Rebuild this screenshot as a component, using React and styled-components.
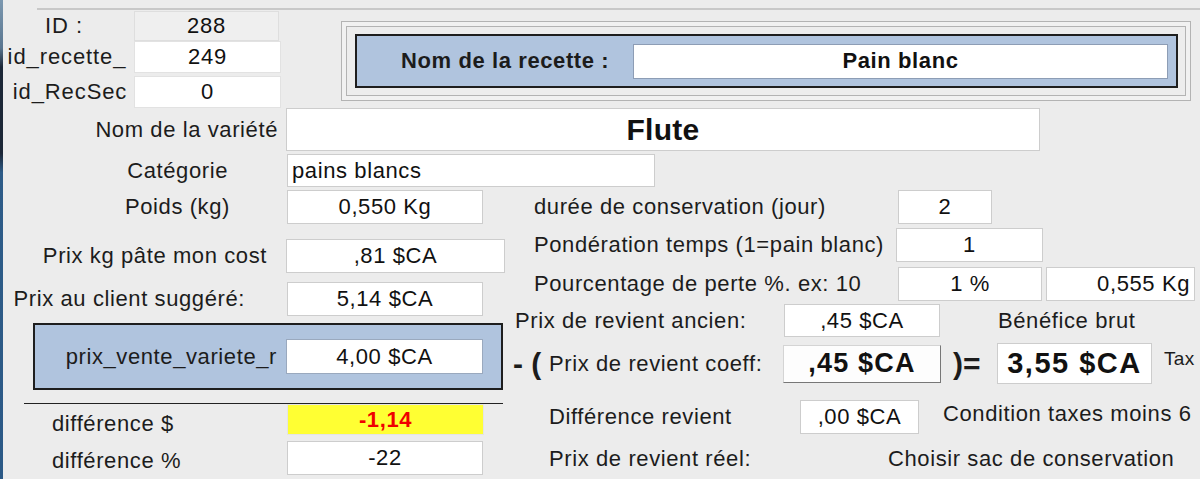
import React from "react";
import styled, { createGlobalStyle } from "styled-components";

const GlobalStyle = createGlobalStyle`
  html, body {
    margin: 0;
    padding: 0;
    background: #ececec;
  }
  body {
    font-family: "Liberation Sans", Arial, Helvetica, sans-serif;
    color: #1c1c1c;
  }
`;

const Screen = styled.div`
  position: relative;
  width: 1200px;
  height: 479px;
  overflow: hidden;
  background: #ececec;
  font-size: 22px;
  letter-spacing: 0.6px;

  /* window edge on the left */
  &::before {
    content: "";
    position: absolute;
    left: 0;
    top: 0;
    bottom: 0;
    width: 3px;
    background: linear-gradient(#7c98b0 0, #5a7690 10%, #1c2737 14%, #1c2737 32%, #2e5c88 36%, #2b5986 100%);
  }
`;

const TopRule = styled.div`
  margin: 8px 0 0 37px;
  height: 2px;
  background: #c8c8c8;
`;

const Header = styled.div`
  display: flex;
  align-items: flex-start;
  height: 98px;
`;

const IdBlock = styled.div`
  display: flex;
  flex-direction: column;
  padding-top: 1px;
`;

const Row = styled.div`
  display: flex;
  align-items: center;
  height: ${(p) => p.$h || 34}px;
  margin-top: ${(p) => p.$mt || 0}px;
  margin-left: ${(p) => p.$ml || 0}px;
`;

const Label = styled.span`
  box-sizing: border-box;
  flex: none;
  width: ${(p) => (p.$w ? `${p.$w}px` : "auto")};
  margin-left: ${(p) => p.$ml || 0}px;
  padding: ${(p) => p.$pt || 0}px ${(p) => p.$pr || 0}px ${(p) => p.$pb || 0}px ${(p) => p.$pl || 0}px;
  text-align: ${(p) => p.$align || "left"};
  font-size: ${(p) => p.$size || 22}px;
  letter-spacing: ${(p) => (p.$ls != null ? p.$ls : 0.6)}px;
  white-space: nowrap;
  color: #1c1c1c;
`;

const Field = styled.div`
  box-sizing: border-box;
  flex: none;
  width: ${(p) => p.$w}px;
  height: ${(p) => p.$h || 34}px;
  margin-left: ${(p) => p.$ml || 0}px;
  display: flex;
  align-items: center;
  justify-content: ${(p) =>
    p.$align === "left" ? "flex-start" : p.$align === "right" ? "flex-end" : "center"};
  padding: 0 4px;
  background: ${(p) => p.$bg || "#fff"};
  border: 1px solid ${(p) => p.$border || "#cdcdcd"};
  color: ${(p) => p.$color || "#111"};
  font-weight: ${(p) => (p.$bold ? 700 : 400)};
  font-size: ${(p) => p.$size || 22}px;
  letter-spacing: ${(p) => (p.$ls != null ? p.$ls : 0.6)}px;
  white-space: nowrap;
`;

const CoeffButton = styled(Field)`
  background: #fdfdfd;
  border-color: #d4d4d4 #777 #777 #d4d4d4;
`;

const Symbol = styled.span`
  flex: none;
  box-sizing: border-box;
  width: ${(p) => p.$w}px;
  margin-left: ${(p) => p.$ml || 0}px;
  padding-left: ${(p) => p.$pl || 0}px;
  font-size: 30px;
  font-weight: 700;
  letter-spacing: 0;
  white-space: pre;
  color: #1c1c1c;
`;

const RecipeFrame = styled.div`
  margin: 11px 0 0 60px;
  padding: 4px;
  border: 1px solid #b3b3b3;
  background: #f1f1f1;
`;

const RecipeInner = styled.div`
  padding: 7px 7px 7px 8px;
  border: 1px solid #b3b3b3;
  background: #ededed;
`;

const BlueBox = styled.div`
  box-sizing: border-box;
  display: flex;
  align-items: center;
  width: ${(p) => p.$w}px;
  height: ${(p) => p.$h}px;
  margin-top: ${(p) => p.$mt || 0}px;
  margin-left: ${(p) => p.$ml || 0}px;
  padding-left: ${(p) => p.$pl || 0}px;
  background: #b0c4de;
  border: 2px solid #1e1e1e;
`;

const BoldLabel = styled.span`
  flex: none;
  width: ${(p) => p.$w}px;
  font-weight: 700;
  font-size: 22px;
  white-space: nowrap;
`;

const Columns = styled.div`
  display: flex;
  margin-top: 3px;
`;

const LeftCol = styled.div`
  flex: none;
  width: 510px;
  display: flex;
  flex-direction: column;
`;

const RightCol = styled.div`
  flex: 1;
  display: flex;
  flex-direction: column;
`;

const Rule = styled.div`
  margin: 13px 0 0 24px;
  width: 479px;
  height: 1px;
  background: #222;
`;

export default function App() {
  return (
    <>
      <GlobalStyle />
      <Screen>
        <TopRule />
        <Header>
          <IdBlock>
            <Row $h={30}>
              <Label $w={128} $align="center" $ls={0.9}>ID :</Label>
              <Field $w={145} $h={30} $ml={6} $bg="#efefef" $border="#dedede" $ls={0.8}>288</Field>
            </Row>
            <Row $h={32}>
              <Label $w={134} $align="center" $ls={0.9}>id_recette_</Label>
              <Field $w={147} $h={32} $border="#e2e2e2" $ls={0.8}>249</Field>
            </Row>
            <Row $h={32} $mt={3}>
              <Label $w={140} $align="center" $ls={0.9}>id_RecSec</Label>
              <Field $w={147} $h={32} $ml={-6} $border="#e2e2e2" $ls={0.8}>0</Field>
            </Row>
          </IdBlock>
          <RecipeFrame>
            <RecipeInner>
              <BlueBox $w={823} $h={54} $pl={44}>
                <BoldLabel $w={232}>Nom de la recette :</BoldLabel>
                <Field $w={535} $h={35} $border="#8d9db5" $bold>Pain blanc</Field>
              </BlueBox>
            </RecipeInner>
          </RecipeFrame>
        </Header>

        <Row $h={43}>
          <Label $w={278} $align="right">Nom de la variété</Label>
          <Field $w={754} $h={43} $ml={8} $bold $size={30} $ls={0.3}>Flute</Field>
        </Row>
        <Row $h={33} $mt={3}>
          <Label $w={287} $align="right" $pr={59}>Catégorie</Label>
          <Field $w={368} $h={33} $align="left">pains blancs</Field>
        </Row>

        <Columns>
          <LeftCol>
            <Row $h={34}>
              <Label $w={287} $align="right" $pr={57}>Poids (kg)</Label>
              <Field $w={196}>0,550 Kg</Field>
            </Row>
            <Row $h={34} $mt={15}>
              <Label $w={286} $align="right" $pr={19}>Prix kg pâte mon cost</Label>
              <Field $w={219}>,81 $CA</Field>
            </Row>
            <Row $h={34} $mt={9}>
              <Label $w={287} $align="right" $pr={42}>Prix au client suggéré:</Label>
              <Field $w={196}>5,14 $CA</Field>
            </Row>
            <BlueBox $w={470} $h={67} $mt={7} $ml={33}>
              <Label $w={251} $align="right" $pr={9}>prix_vente_variete_r</Label>
              <Field $w={197} $h={35} $border="#9aa9be">4,00 $CA</Field>
            </BlueBox>
            <Rule />
            <Row $h={31}>
              <Label $w={287} $pl={52} $pt={8}>différence $</Label>
              <Field $w={197} $h={31} $bg="#ffff33" $border="#e4e4e4" $color="#f00000" $bold>-1,14</Field>
            </Row>
            <Row $h={34} $mt={6}>
              <Label $w={287} $pl={52} $pt={5}>différence %</Label>
              <Field $w={196}>-22</Field>
            </Row>
          </LeftCol>

          <RightCol>
            <Row $h={34} $ml={24}>
              <Label $w={364}>durée de conservation (jour)</Label>
              <Field $w={94}>2</Field>
            </Row>
            <Row $h={34} $mt={4} $ml={24}>
              <Label $w={362}>Pondération temps (1=pain blanc)</Label>
              <Field $w={147}>1</Field>
            </Row>
            <Row $h={34} $mt={5} $ml={24}>
              <Label $w={364}>Pourcentage de perte %. ex: 10</Label>
              <Field $w={144}>1 %</Field>
              <Field $w={149} $ml={4} $align="right">0,555 Kg</Field>
            </Row>
            <Row $h={33} $mt={3} $ml={5}>
              <Label $w={269}>Prix de revient ancien:</Label>
              <Field $w={156} $h={33}>,45 $CA</Field>
              <Label $ml={58}>Bénéfice brut</Label>
            </Row>
            <Row $h={43} $mt={5}>
              <Symbol $w={39} $pl={3}>{"- ("}</Symbol>
              <Label $w={234}>Prix de revient coeff:</Label>
              <CoeffButton $w={158} $h={38} $bold $size={27} $ls={1.2}>,45 $CA</CoeffButton>
              <Symbol $w={44} $ml={12}>{")="}</Symbol>
              <Field $w={155} $h={41} $bold $size={29} $ls={1.5}>3,55 $CA</Field>
              <Label $ml={12} $size={19} $ls={0.3} $pb={10}>Tax</Label>
            </Row>
            <Row $h={34} $mt={15} $ml={39}>
              <Label $w={251}>Différence revient</Label>
              <Field $w={119}>,00 $CA</Field>
              <Label $ml={24} $pb={6}>Condition taxes moins 6</Label>
            </Row>
            <Row $h={34} $mt={8} $ml={39}>
              <Label $w={339}>Prix de revient réel:</Label>
              <Label>Choisir sac de conservation</Label>
            </Row>
          </RightCol>
        </Columns>
      </Screen>
    </>
  );
}
